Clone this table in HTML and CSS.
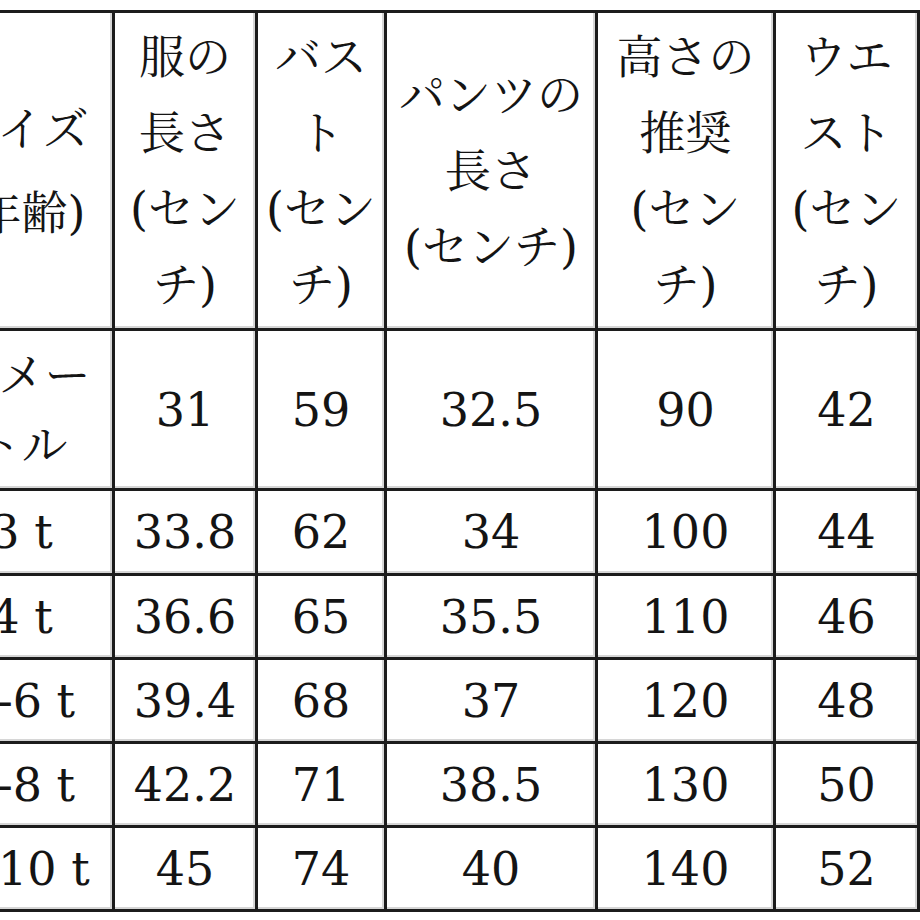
FILE: index.html
```html
<!DOCTYPE html>
<html lang="ja">
<head>
<meta charset="utf-8">
<title>サイズ表</title>
<link rel="stylesheet" href="styles.css">
</head>
<body>
<table class="size-table">
  <colgroup>
    <col class="c1">
    <col class="c2">
    <col class="c3">
    <col class="c4">
    <col class="c5">
    <col class="c6">
  </colgroup>
  <thead>
    <tr class="head-row">
      <th class="first">サイズ<br>(年齢)</th>
      <th>服の<br>長さ<br>(セン<br>チ)</th>
      <th>バス<br>ト<br>(セン<br>チ)</th>
      <th>パンツの<br>長さ<br>(センチ)</th>
      <th>高さの<br>推奨<br>(セン<br>チ)</th>
      <th>ウエ<br>スト<br>(セン<br>チ)</th>
    </tr>
  </thead>
  <tbody>
    <tr class="tall-row">
      <td>２メー<br>トル</td><td>31</td><td>59</td><td>32.5</td><td>90</td><td>42</td>
    </tr>
    <tr class="row r85">
      <td>3 t</td><td>33.8</td><td>62</td><td>34</td><td>100</td><td>44</td>
    </tr>
    <tr class="row">
      <td>4 t</td><td>36.6</td><td>65</td><td>35.5</td><td>110</td><td>46</td>
    </tr>
    <tr class="row">
      <td>5-6 t</td><td>39.4</td><td>68</td><td>37</td><td>120</td><td>48</td>
    </tr>
    <tr class="row">
      <td>7-8 t</td><td>42.2</td><td>71</td><td>38.5</td><td>130</td><td>50</td>
    </tr>
    <tr class="row">
      <td>9-10 t</td><td>45</td><td>74</td><td>40</td><td>140</td><td>52</td>
    </tr>
  </tbody>
</table>
</body>
</html>
```

FILE: styles.css
```css
html, body {
  margin: 0;
  padding: 0;
  background: #ffffff;
  overflow: hidden;
}

body {
  width: 920px;
  height: 920px;
  font-family: "DejaVu Serif", "Noto Serif CJK JP", "Noto Sans CJK JP", serif;
  color: #141414;
}

.size-table {
  border-collapse: collapse;
  table-layout: fixed;
  width: 989px;
  margin-top: 10px;
  margin-left: -72px;
  font-size: 46px;
}

.c1 { width: 184px; }
.c2 { width: 143px; }
.c3 { width: 129px; }
.c4 { width: 211px; }
.c5 { width: 178px; }
.c6 { width: 144px; }

.size-table th,
.size-table td {
  border: 3px solid #1c1c1c;
  padding: 0 3px;
  text-align: center;
  vertical-align: middle;
  font-weight: normal;
  white-space: nowrap;
  box-shadow: inset -2px -2px 0 #d6d6d6;
}

.size-table th {
  line-height: 76px;
}

.size-table th.first {
  line-height: 84px;
}

.size-table td {
  line-height: 70px;
}

.head-row { height: 318px; }
.tall-row { height: 160px; }
.row { height: 84px; }
.r85 { height: 85px; }
```
